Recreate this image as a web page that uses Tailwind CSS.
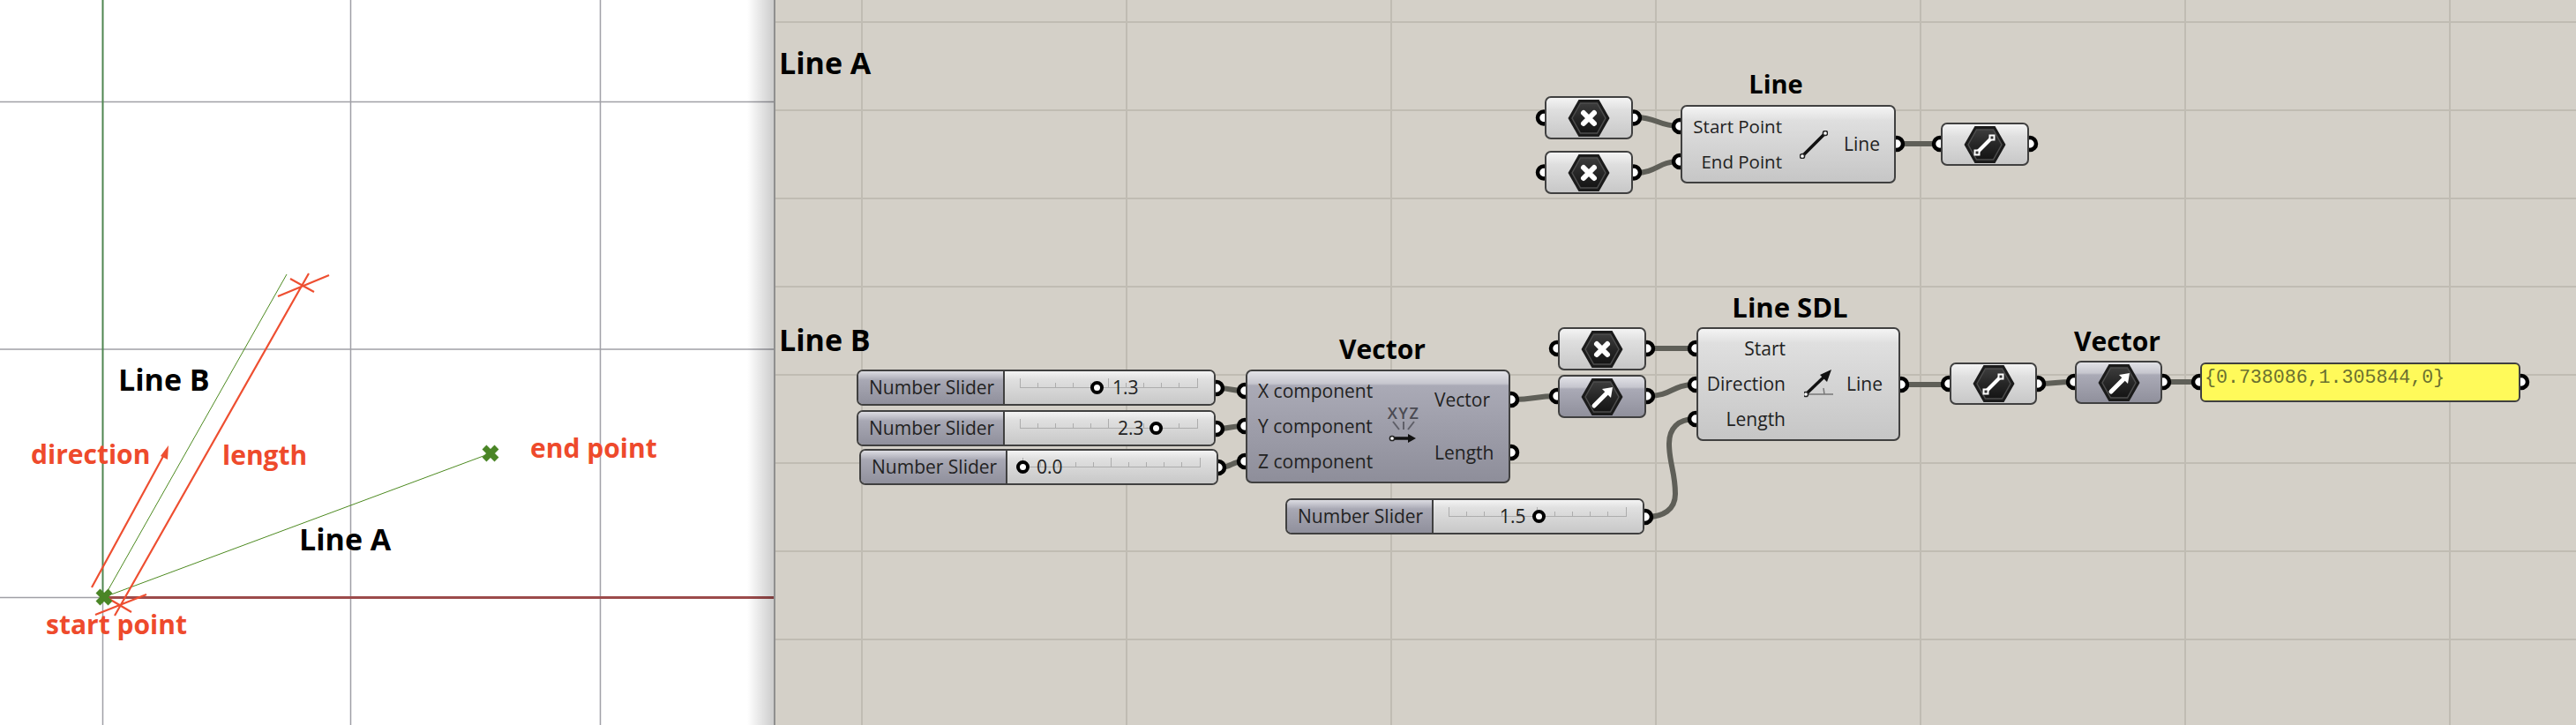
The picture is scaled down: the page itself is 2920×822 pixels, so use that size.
<!DOCTYPE html>
<html lang="en">
<head>
    <meta charset="UTF-8">
    <title>Line and Line SDL</title>
    <script src="https://cdn.jsdelivr.net/npm/@tailwindcss/browser@4"></script>
</head>
<body class="font-['Open_Sans',sans-serif] overflow-hidden">
    <!-- shared hexagon icons -->
    <svg class="absolute w-0 h-0">
        <defs>
            <linearGradient id="hexFill" x1="0" y1="0" x2="0" y2="1">
                <stop offset="0" stop-color="#3c3c3c"/>
                <stop offset="0.5" stop-color="#262626"/>
                <stop offset="1" stop-color="#141414"/>
            </linearGradient>
            <g id="hexBase">
                <polygon points="0.5,22 12.5,1 35.5,1 47.5,22 35.5,43 12.5,43" fill="#1b1b1b"/>
                <polygon points="5,22 14.5,5 33.5,5 43,22 33.5,39 14.5,39" fill="url(#hexFill)" stroke="#4d4d4d" stroke-width="1.5"/>
            </g>
        </defs>
        <symbol id="hexPoint" viewBox="0 0 48 44">
            <use href="#hexBase"/>
            <path d="M18 16 30 28M30 16 18 28" stroke="#fff" stroke-width="6" stroke-linecap="round"/>
        </symbol>
        <symbol id="hexVector" viewBox="0 0 48 44">
            <use href="#hexBase"/>
            <path d="M15 32 29 18" stroke="#fff" stroke-width="5" stroke-linecap="round"/>
            <polygon points="36,11 24,13 34,23" fill="#fff"/>
        </symbol>
        <symbol id="hexCurve" viewBox="0 0 48 44">
            <use href="#hexBase"/>
            <path d="M15 31 32 14" stroke="#fff" stroke-width="4"/>
            <rect x="11.5" y="27.5" width="7" height="7" fill="#fff"/>
            <rect x="13.5" y="29.5" width="3" height="3" fill="#333"/>
            <rect x="28.5" y="10.5" width="7" height="7" fill="#fff"/>
            <rect x="30.5" y="12.5" width="3" height="3" fill="#333"/>
        </symbol>
        <symbol id="track" viewBox="0 0 202 12">
            <path d="M0.5 10.5H201.5M0.5 0V11M100.5 0V11M201.5 0V11M20.5 5V11M40.5 5V11M60.5 5V11M80.5 5V11M120.5 5V11M140.5 5V11M160.5 5V11M180.5 5V11" stroke="#adadad" stroke-width="1" fill="none"/>
        </symbol>
    </svg>

    <div class="flex w-[2920px] h-[822px]">
        <!-- Rhino viewport -->
        <div class="relative w-[879px] h-full bg-white border-r-2 border-[#8f8f8f] shrink-0">
            <svg class="absolute inset-0" width="877" height="822" viewBox="0 0 877 822" fill="none">
                <path d="M0 115.5H877M0 396H877M0 677.5H118M397.5 0V822M680.5 0V822M116.5 677V822" stroke="#a0a0a6" stroke-width="1.5"/>
                <path d="M116.5 0V677" stroke="#4f8650" stroke-width="2"/>
                <path d="M118 677.5H877" stroke="#9c4b4b" stroke-width="3"/>
                <path d="M118 677 556 514M118 677 325 311" stroke="#4d8a20" stroke-width="1"/>
                <path d="M130 698 350 310M315 336 373 312M329 316 356 331M108 697 166 674M122 678 149 694M104 666 189 510" stroke="#ee4f31" stroke-width="2.2"/>
                <polygon points="191,505 182,517 190,521" fill="#ee4f31"/>
                <path d="M111 670 125 684M125 670 111 684M549 507 563 521M563 507 549 521" stroke="#4a8526" stroke-width="7"/>
            </svg>
            <div class="absolute top-0 right-0 w-[30px] h-full bg-linear-to-r from-transparent to-black/20"></div>
            <span class="absolute left-[134px] top-[408px] text-[34px] leading-[44px] font-bold text-black">Line B</span>
            <span class="absolute left-[339px] top-[589px] text-[34px] leading-[44px] font-bold text-black">Line A</span>
            <span class="absolute left-[35px] top-[494px] text-[30px] leading-[42px] font-bold text-[#ee4a2c]">direction</span>
            <span class="absolute left-[252px] top-[495px] text-[30px] leading-[42px] font-bold text-[#ee4a2c]">length</span>
            <span class="absolute left-[601px] top-[487px] text-[30px] leading-[42px] font-bold text-[#ee4a2c]">end point</span>
            <span class="absolute left-[52px] top-[687px] text-[30px] leading-[42px] font-bold text-[#ee4a2c]">start point</span>
        </div>

        <!-- Grasshopper canvas -->
        <div class="relative flex-1 h-full bg-[#d4d0c8] text-[21px] leading-none text-[#222]">
            <svg class="absolute inset-0" width="2041" height="822" viewBox="879 0 2041 822" fill="none">
                <!-- grid -->
                <path d="M879 25H2920M879 125H2920M879 225H2920M879 325H2920M879 425H2920M879 525H2920M879 625H2920M879 725H2920M977 0V822M1277 0V822M1577 0V822M1877 0V822M2177 0V822M2477 0V822M2777 0V822" stroke="#c0bcb3" stroke-width="2"/>
                <!-- wires -->
                <g stroke="#5f5f58" stroke-width="6">
                    <path d="M1854 133C1878 133 1880 143 1903 143"/>
                    <path d="M1854 196C1878 196 1880 183 1903 183"/>
                    <path d="M2152 163H2198"/>
                    <path d="M1381 440C1395 440 1395 443 1410 443"/>
                    <path d="M1381 486C1395 486 1395 483 1410 483"/>
                    <path d="M1383 530C1396 530 1396 523 1410 523"/>
                    <path d="M1715 453C1740 453 1740 449 1764 449"/>
                    <path d="M1869 395H1921"/>
                    <path d="M1869 449C1895 449 1895 436 1921 436"/>
                    <path d="M1867 586C1885 586 1899 578 1899 560C1899 535 1892 525 1892 503C1892 486 1902 475 1921 475"/>
                    <path d="M2157 436H2208"/>
                    <path d="M2312 435C2330 435 2330 433 2350 433"/>
                    <path d="M2454 433H2492"/>
                </g>
                <!-- ports: centred just outside the node edge, the node hides the rest -->
                <g fill="#fff" stroke="#000" stroke-width="4.5">
                    <circle cx="1750" cy="133.5" r="7"/><circle cx="1852" cy="133.5" r="7"/>
                    <circle cx="1750" cy="195.5" r="7"/><circle cx="1852" cy="195.5" r="7"/>
                    <circle cx="1904" cy="143" r="7"/><circle cx="1904" cy="183" r="7"/><circle cx="2150" cy="163" r="7"/>
                    <circle cx="2199" cy="163" r="7"/><circle cx="2301" cy="163" r="7"/>
                    <circle cx="1379" cy="440" r="7"/><circle cx="1379" cy="486" r="7"/><circle cx="1381" cy="530" r="7"/><circle cx="1865" cy="586" r="7"/>
                    <circle cx="1411" cy="443" r="7"/><circle cx="1411" cy="483" r="7"/><circle cx="1411" cy="523" r="7"/>
                    <circle cx="1713" cy="453" r="7"/><circle cx="1713" cy="513" r="7"/>
                    <circle cx="1765" cy="395" r="7"/><circle cx="1867" cy="395" r="7"/>
                    <circle cx="1765" cy="449" r="7"/><circle cx="1867" cy="449" r="7"/>
                    <circle cx="1922" cy="395" r="7"/><circle cx="1922" cy="436" r="7"/><circle cx="1922" cy="475" r="7"/><circle cx="2155" cy="436" r="7"/>
                    <circle cx="2209" cy="435" r="7"/><circle cx="2310" cy="435" r="7"/>
                    <circle cx="2351" cy="433" r="7"/><circle cx="2452" cy="433" r="7"/>
                    <circle cx="2493" cy="433" r="7"/><circle cx="2858" cy="433" r="7"/>
                </g>
            </svg>

            <span class="absolute left-[4px] top-[49px] text-[34px] leading-[44px] font-bold text-black">Line A</span>
            <span class="absolute left-[4px] top-[363px] text-[34px] leading-[44px] font-bold text-black">Line B</span>

            <!-- Line A group -->
            <div class="absolute left-[872px] top-[109px] w-[100px] h-[49px] flex items-center justify-center rounded-[7px] border-2 border-[#404040] bg-[linear-gradient(#f4f4f4,#e2e2e2_12px,#dfdfdf_13px,#c8c8c8)]">
                <svg class="w-[48px] h-[44px]"><use href="#hexPoint"/></svg>
            </div>
            <div class="absolute left-[872px] top-[171px] w-[100px] h-[49px] flex items-center justify-center rounded-[7px] border-2 border-[#404040] bg-[linear-gradient(#f4f4f4,#e2e2e2_12px,#dfdfdf_13px,#c8c8c8)]">
                <svg class="w-[48px] h-[44px]"><use href="#hexPoint"/></svg>
            </div>

            <span class="absolute left-[1134px] top-[95px] -translate-x-1/2 -translate-y-1/2 text-[29px] leading-[40px] font-bold text-black">Line</span>
            <div class="absolute left-[1026px] top-[119px] w-[244px] h-[89px] flex items-center rounded-[7px] border-2 border-[#404040] bg-[linear-gradient(#f4f4f4,#e2e2e2_14px,#dfdfdf_15px,#c6c6c6)]">
                <div class="w-[113px] flex flex-col items-end text-[20.5px]">
                    <span class="h-[40px] flex items-center">Start Point</span>
                    <span class="h-[40px] flex items-center">End Point</span>
                </div>
                <svg class="ml-[20px] w-[32px] h-[32px] shrink-0" viewBox="0 0 32 32" fill="none">
                    <path d="M3 29 29 3" stroke="#111" stroke-width="3.5"/>
                    <circle cx="3" cy="29" r="2.6" fill="#fff" stroke="#222" stroke-width="1.5"/>
                    <circle cx="29" cy="3" r="2.6" fill="#fff" stroke="#222" stroke-width="1.5"/>
                </svg>
                <span class="ml-[18px]">Line</span>
            </div>
            <div class="absolute left-[1321px] top-[139px] w-[100px] h-[49px] flex items-center justify-center rounded-[7px] border-2 border-[#404040] bg-[linear-gradient(#f4f4f4,#e2e2e2_12px,#dfdfdf_13px,#c8c8c8)]">
                <svg class="w-[48px] h-[44px]"><use href="#hexCurve"/></svg>
            </div>

            <!-- sliders -->
            <div class="absolute left-[92px] top-[419px] w-[407px] h-[41px] flex rounded-[7px] border-2 border-[#404040] overflow-hidden">
                <div class="w-[166px] shrink-0 flex items-center pl-[12px] border-r-2 border-[#404040] bg-[linear-gradient(#dcdce2,#b4b4be_8px,#a8a8b4_10px,#90909c)]">Number Slider</div>
                <div class="relative flex-1 bg-[linear-gradient(#f4f4f4,#e2e2e2_8px,#dfdfdf_10px,#c8c8c8)]">
                    <svg class="absolute left-[17px] top-[8px] w-[202px] h-[12px]"><use href="#track"/></svg>
                    <span class="absolute left-[122px] top-0 h-full flex items-center">1.3</span>
                    <div class="absolute left-[97px] top-[11px] w-[15px] h-[15px] rounded-full border-4 border-black bg-white"></div>
                </div>
            </div>
            <div class="absolute left-[92px] top-[465px] w-[407px] h-[41px] flex rounded-[7px] border-2 border-[#404040] overflow-hidden">
                <div class="w-[166px] shrink-0 flex items-center pl-[12px] border-r-2 border-[#404040] bg-[linear-gradient(#dcdce2,#b4b4be_8px,#a8a8b4_10px,#90909c)]">Number Slider</div>
                <div class="relative flex-1 bg-[linear-gradient(#f4f4f4,#e2e2e2_8px,#dfdfdf_10px,#c8c8c8)]">
                    <svg class="absolute left-[17px] top-[8px] w-[202px] h-[12px]"><use href="#track"/></svg>
                    <span class="absolute left-[128px] top-0 h-full flex items-center">2.3</span>
                    <div class="absolute left-[164px] top-[11px] w-[15px] h-[15px] rounded-full border-4 border-black bg-white"></div>
                </div>
            </div>
            <div class="absolute left-[95px] top-[509px] w-[407px] h-[41px] flex rounded-[7px] border-2 border-[#404040] overflow-hidden">
                <div class="w-[166px] shrink-0 flex items-center pl-[12px] border-r-2 border-[#404040] bg-[linear-gradient(#dcdce2,#b4b4be_8px,#a8a8b4_10px,#90909c)]">Number Slider</div>
                <div class="relative flex-1 bg-[linear-gradient(#f4f4f4,#e2e2e2_8px,#dfdfdf_10px,#c8c8c8)]">
                    <svg class="absolute left-[17px] top-[8px] w-[202px] h-[12px]"><use href="#track"/></svg>
                    <span class="absolute left-[33px] top-0 h-full flex items-center">0.0</span>
                    <div class="absolute left-[10px] top-[11px] w-[15px] h-[15px] rounded-full border-4 border-black bg-white"></div>
                </div>
            </div>
            <div class="absolute left-[578px] top-[565px] w-[407px] h-[41px] flex rounded-[7px] border-2 border-[#404040] overflow-hidden">
                <div class="w-[166px] shrink-0 flex items-center pl-[12px] border-r-2 border-[#404040] bg-[linear-gradient(#dcdce2,#b4b4be_8px,#a8a8b4_10px,#90909c)]">Number Slider</div>
                <div class="relative flex-1 bg-[linear-gradient(#f4f4f4,#e2e2e2_8px,#dfdfdf_10px,#c8c8c8)]">
                    <svg class="absolute left-[17px] top-[8px] w-[202px] h-[12px]"><use href="#track"/></svg>
                    <span class="absolute left-[75px] top-0 h-full flex items-center">1.5</span>
                    <div class="absolute left-[112px] top-[11px] w-[15px] h-[15px] rounded-full border-4 border-black bg-white"></div>
                </div>
            </div>

            <!-- Vector XYZ -->
            <span class="absolute left-[688px] top-[396px] -translate-x-1/2 -translate-y-1/2 text-[30px] leading-[40px] font-bold text-black">Vector</span>
            <div class="absolute left-[533px] top-[419px] w-[300px] h-[129px] flex items-center rounded-[7px] border-2 border-[#404040] bg-[linear-gradient(#e2e2e7,#c6c6ce_14px,#aaaab6_16px,#8e8e9a)]">
                <div class="pl-[12px] w-[143px] shrink-0 flex flex-col">
                    <span class="h-[40px] flex items-center">X component</span>
                    <span class="h-[40px] flex items-center">Y component</span>
                    <span class="h-[40px] flex items-center">Z component</span>
                </div>
                <svg class="ml-[15px] w-[38px] h-[44px] shrink-0" viewBox="0 0 38 44" fill="none">
                    <text x="19" y="13" text-anchor="middle" font-size="18" font-weight="600" letter-spacing="1.5" fill="#4a4a52">XYZ</text>
                    <path d="M7 16 14 25M19 16V25M31 16 24 25" stroke="#5f5f68" stroke-width="2"/>
                    <path d="M6 35H26" stroke="#111" stroke-width="3.5"/>
                    <polygon points="33,35 24,30 24,40" fill="#111"/>
                    <circle cx="6" cy="35" r="2.6" fill="#fff" stroke="#222" stroke-width="1.5"/>
                </svg>
                <div class="ml-[16px] flex flex-col">
                    <span class="h-[60px] flex items-center">Vector</span>
                    <span class="h-[60px] flex items-center">Length</span>
                </div>
            </div>

            <!-- Line B inputs -->
            <div class="absolute left-[887px] top-[371px] w-[100px] h-[49px] flex items-center justify-center rounded-[7px] border-2 border-[#404040] bg-[linear-gradient(#f4f4f4,#e2e2e2_12px,#dfdfdf_13px,#c8c8c8)]">
                <svg class="w-[48px] h-[44px]"><use href="#hexPoint"/></svg>
            </div>
            <div class="absolute left-[887px] top-[425px] w-[100px] h-[49px] flex items-center justify-center rounded-[7px] border-2 border-[#404040] bg-[linear-gradient(#e2e2e7,#c6c6ce_12px,#aaaab6_14px,#90909c)]">
                <svg class="w-[48px] h-[44px]"><use href="#hexVector"/></svg>
            </div>

            <!-- Line SDL -->
            <span class="absolute left-[1150px] top-[348px] -translate-x-1/2 -translate-y-1/2 text-[31px] leading-[40px] font-bold text-black">Line SDL</span>
            <div class="absolute left-[1044px] top-[371px] w-[231px] h-[129px] flex items-center rounded-[7px] border-2 border-[#404040] bg-[linear-gradient(#f4f4f4,#e2e2e2_14px,#dfdfdf_16px,#c6c6c6)]">
                <div class="w-[99px] shrink-0 flex flex-col items-end">
                    <span class="h-[40px] flex items-center">Start</span>
                    <span class="h-[40px] flex items-center">Direction</span>
                    <span class="h-[40px] flex items-center">Length</span>
                </div>
                <svg class="ml-[21px] w-[36px] h-[36px] shrink-0" viewBox="0 0 36 36" fill="none">
                    <path d="M2 29H33M22 22 23 29" stroke="#777" stroke-width="1.5"/>
                    <path d="M2 29 25 7" stroke="#111" stroke-width="3.5"/>
                    <polygon points="31,1 18,7 26,15" fill="#111"/>
                    <circle cx="2" cy="29" r="2.6" fill="#fff" stroke="#222" stroke-width="1.5"/>
                </svg>
                <span class="ml-[12px]">Line</span>
            </div>

            <!-- outputs -->
            <div class="absolute left-[1331px] top-[411px] w-[99px] h-[48px] flex items-center justify-center rounded-[7px] border-2 border-[#404040] bg-[linear-gradient(#f4f4f4,#e2e2e2_12px,#dfdfdf_13px,#c8c8c8)]">
                <svg class="w-[48px] h-[44px]"><use href="#hexCurve"/></svg>
            </div>
            <span class="absolute left-[1521px] top-[387px] -translate-x-1/2 -translate-y-1/2 text-[30px] leading-[40px] font-bold text-black">Vector</span>
            <div class="absolute left-[1473px] top-[409px] w-[99px] h-[49px] flex items-center justify-center rounded-[7px] border-2 border-[#404040] bg-[linear-gradient(#e2e2e7,#c6c6ce_12px,#aaaab6_14px,#90909c)]">
                <svg class="w-[48px] h-[44px]"><use href="#hexVector"/></svg>
            </div>
            <div class="absolute left-[1615px] top-[411px] w-[363px] h-[45px] pl-[3px] pt-[3px] rounded-[6px] border-2 border-[#404040] bg-[#fffa5a] font-['Liberation_Mono',monospace] text-[21.6px] leading-[24px] text-[#6a7030]">{0.738086,1.305844,0}</div>
        </div>
    </div>
</body>
</html>
